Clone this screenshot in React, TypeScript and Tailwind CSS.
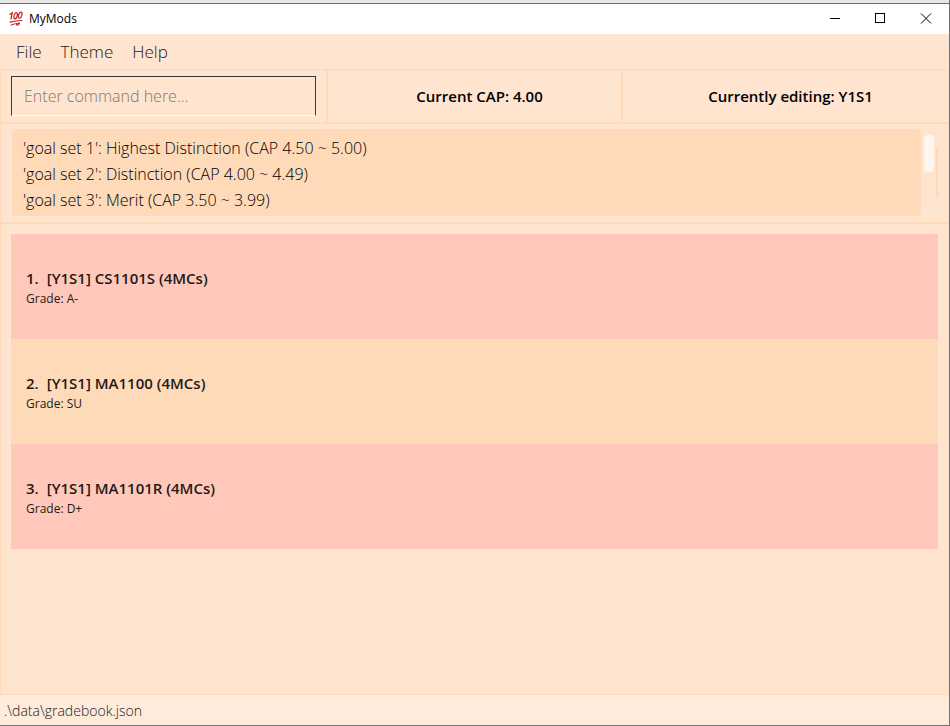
import { useState } from "react";

const goals = [
  "'goal set 1': Highest Distinction (CAP 4.50 ~ 5.00)",
  "'goal set 2': Distinction (CAP 4.00 ~ 4.49)",
  "'goal set 3': Merit (CAP 3.50 ~ 3.99)",
];

const modules = [
  { code: "CS1101S", semester: "Y1S1", credits: 4, grade: "A-" },
  { code: "MA1100", semester: "Y1S1", credits: 4, grade: "SU" },
  { code: "MA1101R", semester: "Y1S1", credits: 4, grade: "D+" },
];

function HundredIcon() {
  return (
    <svg className="h-4 w-4" viewBox="0 0 16 16" fill="none" stroke="#c4201d" strokeLinecap="round" aria-hidden="true">
      <path d="M2 3.2 4.2 1.8 3 7.8" strokeWidth="1.3" />
      <ellipse cx="7.6" cy="4.8" rx="1.5" ry="3.2" transform="rotate(16 7.6 4.8)" strokeWidth="1.2" />
      <ellipse cx="12.2" cy="4.2" rx="1.6" ry="3.2" transform="rotate(16 12.2 4.2)" strokeWidth="1.2" />
      <path d="M2.2 11.2C6 10.2 10 9.6 14 9.5" strokeWidth="1.2" />
      <path d="M3 14C6 12.9 9 12.3 12 12.1L8 14 11 13.8" strokeWidth="1" />
    </svg>
  );
}

function TitleBar() {
  return (
    <header className="flex h-[30px] items-center bg-white pl-2">
      <HundredIcon />
      <h1 className="flex-1 pl-[5px] text-xs text-black">MyMods</h1>
      <button type="button" aria-label="Minimize" className="grid h-full w-[45px] place-items-center">
        <svg className="h-3 w-3" viewBox="0 0 12 12" stroke="#000" shapeRendering="crispEdges">
          <path d="M0 5.5h10" />
        </svg>
      </button>
      <button type="button" aria-label="Maximize" className="grid h-full w-[45px] place-items-center">
        <svg className="h-3 w-3" viewBox="0 0 12 12" fill="none" stroke="#000" shapeRendering="crispEdges">
          <path d="M.5 .5h9v9h-9z" />
        </svg>
      </button>
      <button type="button" aria-label="Close" className="grid h-full w-[46px] place-items-center">
        <svg className="h-3 w-3" viewBox="0 0 12 12" stroke="#000">
          <path d="M1 .5l10 10M11 .5L1 10.5" />
        </svg>
      </button>
    </header>
  );
}

export default function App() {
  const [command, setCommand] = useState("");

  return (
    <div className="flex min-h-screen flex-col border-r border-b border-[#707070] bg-[#ffe4cf] font-['Open_Sans','Noto_Sans',sans-serif] text-black">
      <div className="h-1 border-b border-[#707070] bg-[#e8e8e8]" />
      <TitleBar />
      <nav className="flex h-[35px] items-center gap-[19px] px-4 text-[17px] font-light text-[#1a1a1a]">
        <button type="button">File</button>
        <button type="button">Theme</button>
        <button type="button">Help</button>
      </nav>

      <main className="flex flex-1 flex-col border border-[#ffd9b8]">
        <section className="grid h-[54px] grid-cols-[327fr_295fr_325fr] border-b-2 border-[#ffd9b8]">
          <div className="border-r-2 border-[#ffd9b8] py-[6px] pr-[10px] pl-[10px]">
            <input
              type="text"
              aria-label="Command"
              value={command}
              onChange={(event) => setCommand(event.target.value)}
              placeholder="Enter command here..."
              className="h-[40px] w-full border border-[#383838] border-b-white bg-transparent px-3 text-base font-light outline-none placeholder:text-[#7d7976]"
            />
          </div>
          <p className="flex items-center justify-center border-r-2 border-[#ffd9b8] pl-[10px] text-[15px] font-semibold">
            Current CAP: 4.00
          </p>
          <p className="flex items-center justify-center pl-[10px] text-[15px] font-semibold">
            Currently editing: Y1S1
          </p>
        </section>

        <section className="flex h-[100px] border-b-2 border-[#ffd9b8] pt-[5px] pr-[10px] pb-[6px] pl-[11px]">
          <ul className="flex-1 rounded-sm bg-[#ffdab9] px-[11px] pt-[6px] text-base leading-[26px] font-light">
            {goals.map((goal) => (
              <li key={goal}>{goal}</li>
            ))}
          </ul>
          <div className="ml-[3px] w-[10px] pt-[6px]">
            <div className="h-[37px] rounded bg-[#fff6f0]" />
          </div>
          <div className="ml-[2px] flex w-[2px] items-center">
            <div className="h-[50px] w-[2px] rounded-full bg-[#ffd9b8]" />
          </div>
        </section>

        <ol className="px-[10px] pt-[10px] text-[#1f1a18]">
          {modules.map((module, index) => (
            <li
              key={module.code}
              className="flex h-[105px] flex-col justify-center bg-[#ffdab9] px-[15px] pt-[2px] odd:bg-[#ffc8ba]"
            >
              <h2 className="flex gap-2 text-[15px] leading-[22px] font-semibold">
                <span>{index + 1}.</span>
                <span>
                  [{module.semester}] {module.code} ({module.credits}MCs)
                </span>
              </h2>
              <p className="text-xs leading-5">Grade: {module.grade}</p>
            </li>
          ))}
        </ol>
      </main>

      <footer className="flex h-[30px] items-center bg-[#ffebdb] px-1 pt-[2px] text-sm font-light text-[#1a1a1a]">
        .\data\gradebook.json
      </footer>
    </div>
  );
}
